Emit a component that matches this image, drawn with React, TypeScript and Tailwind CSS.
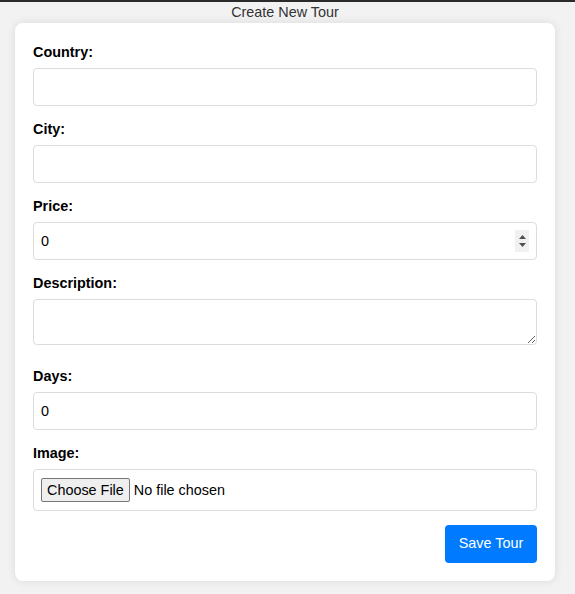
import React from "react";

const FIELDS = [
  { id: "country", label: "Country:", kind: "text" },
  { id: "city", label: "City:", kind: "text" },
  { id: "price", label: "Price:", kind: "number", spinner: true },
  { id: "description", label: "Description:", kind: "textarea" },
  { id: "days", label: "Days:", kind: "number" },
] as const;

const inputCls =
  "block w-full rounded-[4px] border border-solid border-[#dcdcdc] bg-white px-[7px] text-[14.4px] text-black outline-none";

// Chrome-style number spinner (headless doesn't paint the native one)
function Spinner() {
  return (
    <div className="pointer-events-none absolute top-[7.5px] right-[8px] flex h-[22px] w-[14px] flex-col items-center justify-between bg-[#f1f1f1] py-[5px]">
      <svg width="7" height="4" viewBox="0 0 7 4" aria-hidden="true">
        <path d="M3.5 0 L7 4 L0 4 Z" fill="#505050" />
      </svg>
      <svg width="7" height="4" viewBox="0 0 7 4" aria-hidden="true">
        <path d="M0 0 L7 0 L3.5 4 Z" fill="#505050" />
      </svg>
    </div>
  );
}

export default function App() {
  return (
    <div className="min-h-[594px] border-t-2 border-solid border-[#2b2b2b] bg-[#f2f2f2] font-['Liberation_Sans',Arial,sans-serif]">
      <div className="ml-[15px] w-[540px]">
        <h1 className="pt-[2px] text-center text-[14.4px] font-normal leading-[normal] text-[#333]">
          Create New Tour
        </h1>

        <form
          className="mt-[3px] rounded-[8px] bg-white px-[18px] pt-[21px] pb-[18px] shadow-[0_0_10px_rgba(0,0,0,0.1)]"
          onSubmit={(e) => e.preventDefault()}
        >
          {FIELDS.map((f) => (
            <div
              key={f.id}
              className={f.kind === "textarea" ? "mb-[23.5px]" : "mb-[15.5px]"}
            >
              <label
                htmlFor={f.id}
                className="mb-[8px] block text-[14.4px] font-bold leading-[normal] text-black"
              >
                {f.label}
              </label>
              {f.kind === "textarea" ? (
                <textarea id={f.id} className={`${inputCls} h-[45.5px] py-[6px]`} />
              ) : (
                <div className="relative">
                  <input
                    id={f.id}
                    type={f.kind}
                    defaultValue={f.kind === "number" ? 0 : ""}
                    className={`${inputCls} h-[37.5px]`}
                  />
                  {"spinner" in f && f.spinner && <Spinner />}
                </div>
              )}
            </div>
          ))}

          {/* Image upload */}
          <div className="mb-[14px]">
            <label
              htmlFor="image"
              className="mb-[8px] block text-[14.4px] font-bold leading-[normal] text-black"
            >
              Image:
            </label>
            <input
              id="image"
              type="file"
              className="block h-[41.5px] w-full rounded-[4px] border border-solid border-[#dcdcdc] bg-white px-[7px] py-[7.5px] text-[14.4px] leading-[normal] text-black file:mr-[4px] file:rounded-[2px] file:border file:border-solid file:border-[#767676] file:bg-[#efefef] file:px-[5px] file:py-[3px] file:text-black"
            />
          </div>

          <div className="flex justify-end">
            <button
              type="submit"
              className="h-[38px] w-[92px] rounded-[4px] bg-[#007bff] text-[14.4px] text-white"
            >
              Save Tour
            </button>
          </div>
        </form>
      </div>
    </div>
  );
}
